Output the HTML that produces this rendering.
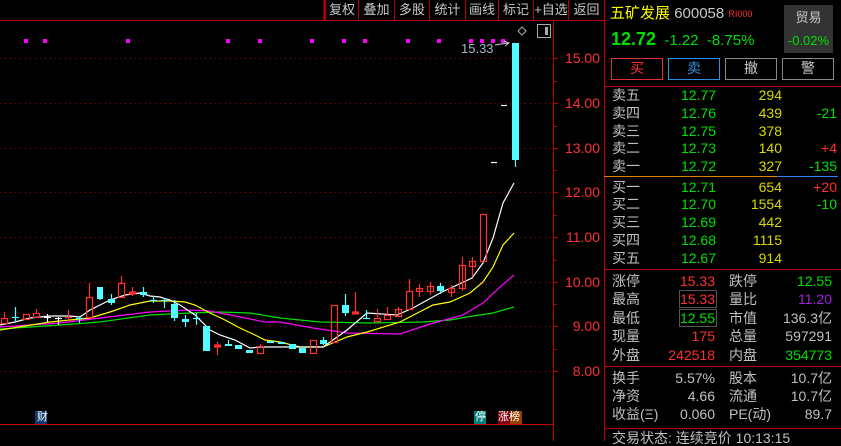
<!DOCTYPE html>
<html><head><meta charset="utf-8"><style>
*{margin:0;padding:0;box-sizing:border-box}
body{width:841px;height:441px;background:#000;overflow:hidden;position:relative;font-family:"Liberation Sans","Noto Sans CJK SC",sans-serif;font-size:13px;color:#c0c0c0}
.a{position:absolute;white-space:nowrap;line-height:16px}
.r{text-align:right}
.g{color:#00e000}.rd{color:#ff3030}.y{color:#d8d800}.w{color:#c0c0c0}
.tb{position:absolute;top:0;height:20px;line-height:20px;font-size:13px;color:#c8c8c8;text-align:center;border-left:1px solid #b00000}
.btn{position:absolute;top:58px;height:22px;width:52px;text-align:center;line-height:20px;font-size:14px}
.p .a{font-size:14px}
</style></head><body>
<svg width="841" height="441" style="position:absolute;left:0;top:0">
<g stroke="#a00000" stroke-width="1" stroke-dasharray="1,4">
<line x1="0" y1="58.5" x2="552" y2="58.5"/><line x1="0" y1="103.5" x2="552" y2="103.5"/>
<line x1="0" y1="148.5" x2="552" y2="148.5"/><line x1="0" y1="192.5" x2="552" y2="192.5"/>
<line x1="0" y1="237.5" x2="552" y2="237.5"/><line x1="0" y1="282.5" x2="552" y2="282.5"/>
<line x1="0" y1="326.5" x2="552" y2="326.5"/><line x1="0" y1="371.5" x2="552" y2="371.5"/>
</g>
<g stroke="#c00000" stroke-width="1">
<line x1="0" y1="20.5" x2="604" y2="20.5"/>
<line x1="553.5" y1="20" x2="553.5" y2="441"/>
<line x1="0" y1="424.5" x2="553" y2="424.5"/>
<line x1="604.5" y1="0" x2="604.5" y2="441"/>
<line x1="553" y1="58.5" x2="558" y2="58.5"/><line x1="553" y1="81.5" x2="557" y2="81.5"/>
<line x1="553" y1="103.5" x2="558" y2="103.5"/><line x1="553" y1="126.5" x2="557" y2="126.5"/>
<line x1="553" y1="148.5" x2="558" y2="148.5"/><line x1="553" y1="170.5" x2="557" y2="170.5"/>
<line x1="553" y1="192.5" x2="558" y2="192.5"/><line x1="553" y1="215.5" x2="557" y2="215.5"/>
<line x1="553" y1="237.5" x2="558" y2="237.5"/><line x1="553" y1="260.5" x2="557" y2="260.5"/>
<line x1="553" y1="282.5" x2="558" y2="282.5"/><line x1="553" y1="304.5" x2="557" y2="304.5"/>
<line x1="553" y1="326.5" x2="558" y2="326.5"/><line x1="553" y1="349.5" x2="557" y2="349.5"/>
<line x1="553" y1="371.5" x2="558" y2="371.5"/>
<line x1="604" y1="86.5" x2="841" y2="86.5"/>
<line x1="604" y1="269.5" x2="841" y2="269.5"/>
<line x1="604" y1="366.5" x2="841" y2="366.5"/>
<line x1="604" y1="428.5" x2="841" y2="428.5"/>
<line x1="324.5" y1="0" x2="324.5" y2="20" stroke-width="2"/>
</g>
<line x1="604" y1="176.5" x2="778" y2="176.5" stroke="#e08000"/>
<line x1="778" y1="176.5" x2="838" y2="176.5" stroke="#3080ff"/>
<g fill="#ff00ff">
<rect x="24" y="39" width="4" height="4"/><rect x="43" y="39" width="4" height="4"/><rect x="126" y="39" width="4" height="4"/><rect x="226" y="39" width="4" height="4"/><rect x="258" y="39" width="4" height="4"/><rect x="310" y="39" width="4" height="4"/><rect x="342" y="39" width="4" height="4"/><rect x="363" y="39" width="4" height="4"/><rect x="406" y="39" width="4" height="4"/><rect x="437" y="39" width="4" height="4"/><rect x="469" y="39" width="4" height="4"/><rect x="480" y="39" width="4" height="4"/><rect x="491" y="39" width="4" height="4"/><rect x="501" y="39" width="4" height="4"/>
</g>
<path d="M522 27 L526 31 L522 35 L518 31Z" fill="none" stroke="#aaa"/>
<rect x="537.5" y="24.5" width="13" height="13" fill="none" stroke="#aaa"/><rect x="545" y="27" width="3" height="8" fill="#aaa"/>
<path d="M495 45 L508 43 M504 41 L509 43 L505 46" stroke="#ccc" fill="none"/>
<g fill="none" stroke-width="1.2">
<polyline stroke="#00e000" points="0,329 30,327 60,325 100,322 150,315 190,313 220,312 250,313 280,318 320,322 370,323 423,322 450,320 467,317 493,313 514,307"/>
<polyline stroke="#ff00ff" points="0,327 30,325 60,323 100,318 150,312 190,310 210,311 225,314 245,318 265,322 280,322 313,328 347,333 400,334 430,324 463,315 483,303 500,287 514,275"/>
<polyline stroke="#ffff00" points="0,330 50,322 90,318 110,312 130,305 150,301 170,301 185,302 195,305 210,313 225,320 240,328 255,335 265,340 280,342 300,347 323,347 347,337 367,332 400,322 433,305 450,302 470,293 483,282 493,267 503,245 514,233"/>
<polyline stroke="#ffffff" points="0,325 15,322 30,318 50,316 70,316 80,317 90,310 100,305 110,300 125,295 140,293 150,296 160,297 170,300 180,305 195,315 210,330 220,335 235,340 250,348 260,347 300,347 323,347 347,330 367,313 397,315 413,308 440,293 472,278 483,263 493,238 503,203 514,183"/>
</g>
<g stroke="#ff3030" fill="none" stroke-width="1.2">
<line x1="4.5" y1="312" x2="4.5" y2="318"/><rect x="1.5" y="318.5" width="6" height="5"/>
<rect x="23.5" y="314.5" width="6" height="5"/>
<line x1="36.5" y1="309" x2="36.5" y2="313"/><rect x="33.5" y="313.5" width="6" height="4"/>
<line x1="68.5" y1="310" x2="68.5" y2="321"/><line x1="65" y1="317.5" x2="72" y2="317.5"/>
<line x1="89.5" y1="283" x2="89.5" y2="297"/><rect x="86.5" y="297.5" width="6" height="20"/>
<line x1="121.5" y1="276" x2="121.5" y2="283"/><rect x="118.5" y="283.5" width="6" height="14"/>
<line x1="132.5" y1="287" x2="132.5" y2="296"/><rect x="129.5" y="292" width="6" height="2" fill="#ff3030"/>
<line x1="217.5" y1="342" x2="217.5" y2="355"/><rect x="214.5" y="345" width="6" height="2" fill="#ff3030"/>
<line x1="260.5" y1="344" x2="260.5" y2="346"/><rect x="257.5" y="346.5" width="6" height="7"/>
<rect x="310.5" y="340.5" width="6" height="13"/>
<rect x="331.5" y="305.5" width="6" height="37"/>
<line x1="355.5" y1="292" x2="355.5" y2="313"/><rect x="352.5" y="312" width="6" height="2" fill="#ff3030"/>
<line x1="377.5" y1="309" x2="377.5" y2="318"/><rect x="374.5" y="318.5" width="6" height="3"/>
<line x1="387.5" y1="307" x2="387.5" y2="315"/><rect x="384.5" y="315.5" width="6" height="4"/>
<line x1="398.5" y1="307" x2="398.5" y2="316"/><rect x="395.5" y="309.5" width="6" height="7"/>
<line x1="409.5" y1="279" x2="409.5" y2="291"/><rect x="406.5" y="291.5" width="6" height="18"/>
<line x1="419.5" y1="284" x2="419.5" y2="297"/><rect x="416.5" y="288.5" width="6" height="3"/>
<line x1="430.5" y1="282" x2="430.5" y2="295"/><rect x="427.5" y="286.5" width="6" height="5"/>
<line x1="451.5" y1="285" x2="451.5" y2="297"/><rect x="448.5" y="288.5" width="6" height="4"/>
<line x1="462.5" y1="257" x2="462.5" y2="291"/><rect x="459.5" y="265.5" width="6" height="23"/>
<line x1="472.5" y1="257" x2="472.5" y2="277"/><rect x="469.5" y="261.5" width="6" height="5"/>
<rect x="480.5" y="214.5" width="6" height="47"/>
</g>
<g stroke="#ffffff" stroke-width="1.2">
<line x1="47.5" y1="314" x2="47.5" y2="322"/><line x1="44" y1="317.5" x2="51" y2="317.5"/>
<line x1="58.5" y1="317" x2="58.5" y2="325"/><line x1="55" y1="318.5" x2="62" y2="318.5"/>
<line x1="491" y1="162.5" x2="497" y2="162.5"/><line x1="501" y1="105.5" x2="507" y2="105.5"/>
</g>
<g stroke="#50ffff" fill="#50ffff" stroke-width="1.2">
<line x1="15.5" y1="307" x2="15.5" y2="322"/><line x1="12" y1="317.5" x2="19" y2="317.5"/>
<line x1="79.5" y1="316" x2="79.5" y2="323"/><line x1="76" y1="318.5" x2="83" y2="318.5"/>
<rect x="97" y="287" width="6" height="12" stroke="none"/><line x1="100" y1="299" x2="100" y2="300"/>
<line x1="111.5" y1="294" x2="111.5" y2="305"/><rect x="108" y="299" width="7" height="4" stroke="none"/>
<line x1="143.5" y1="287" x2="143.5" y2="297"/><rect x="140" y="292" width="7" height="3" stroke="none"/>
<line x1="153.5" y1="296" x2="153.5" y2="303"/><line x1="150" y1="300.5" x2="157" y2="300.5"/>
<line x1="164.5" y1="298" x2="164.5" y2="308"/><line x1="161" y1="300.5" x2="168" y2="300.5"/>
<line x1="174.5" y1="300" x2="174.5" y2="321"/><rect x="171" y="304" width="7" height="14" stroke="none"/>
<line x1="185.5" y1="315" x2="185.5" y2="327"/><rect x="182" y="319" width="7" height="3" stroke="none"/>
<line x1="196.5" y1="313" x2="196.5" y2="325"/><line x1="193" y1="318.5" x2="200" y2="318.5"/>
<rect x="203" y="326" width="7" height="25" stroke="none"/>
<line x1="228.5" y1="340" x2="228.5" y2="345"/><rect x="225" y="344" width="7" height="2" stroke="none"/>
<rect x="235" y="345" width="7" height="4" stroke="none"/>
<rect x="246" y="350" width="7" height="3" stroke="none"/>
<rect x="267" y="341" width="7" height="2" stroke="none"/>
<rect x="278" y="342" width="7" height="2" stroke="none"/>
<rect x="289" y="344" width="7" height="5" stroke="none"/>
<rect x="299" y="348" width="7" height="5" stroke="none"/>
<line x1="323.5" y1="337" x2="323.5" y2="345"/><rect x="320" y="340" width="7" height="4" stroke="none"/>
<line x1="345.5" y1="294" x2="345.5" y2="316"/><rect x="342" y="305" width="7" height="8" stroke="none"/>
<line x1="366.5" y1="310" x2="366.5" y2="319"/><line x1="363" y1="318.5" x2="370" y2="318.5"/>
<line x1="440.5" y1="283" x2="440.5" y2="294"/><rect x="437" y="286" width="7" height="5" stroke="none"/>
<rect x="512" y="43" width="7" height="117" stroke="none"/><line x1="515.5" y1="160" x2="515.5" y2="167"/>
</g>
<rect x="35" y="411" width="12" height="13" fill="#103a70"/>
<rect x="474" y="411" width="12" height="13" fill="#00807a"/>
<rect x="498" y="411" width="12" height="13" fill="#800010"/>
<rect x="510" y="411" width="12" height="13" fill="#904000"/>
<rect x="784" y="5" width="49" height="48" fill="#333"/>
<rect x="611.5" y="58.5" width="51" height="21" fill="none" stroke="#e03030"/>
<rect x="668.5" y="58.5" width="51" height="21" fill="none" stroke="#3090e0"/>
<rect x="725.5" y="58.5" width="51" height="21" fill="none" stroke="#888"/>
<rect x="782.5" y="58.5" width="51" height="21" fill="none" stroke="#888"/>
<rect x="679.5" y="290.5" width="37" height="17" fill="none" stroke="#555"/>
<rect x="679.5" y="309.5" width="37" height="17" fill="none" stroke="#555"/>
</svg>
<div class="tb" style="left:325px;width:33px">复权</div>
<div class="tb" style="left:358px;width:36px">叠加</div>
<div class="tb" style="left:394px;width:35px">多股</div>
<div class="tb" style="left:429px;width:36px">统计</div>
<div class="tb" style="left:465px;width:33px">画线</div>
<div class="tb" style="left:498px;width:35px">标记</div>
<div class="tb" style="left:533px;width:35px">+自选</div>
<div class="tb" style="left:568px;width:36px">返回</div>
<div class="a" style="left:461px;top:41px;color:#a0b4c8;font-size:13px">15.33</div>
<div class="a" style="left:37px;top:409px;color:#fff;font-size:11px">财</div>
<div class="a" style="left:475px;top:409px;color:#fff;font-size:11px">停</div>
<div class="a" style="left:498px;top:409px;color:#fff;font-size:11px">涨榜</div>
<div style="position:absolute;left:556px;top:0;width:44px;color:#ff3030;font-size:14px;text-align:right">
<div class="a r" style="top:50px;width:44px">15.00</div><div class="a r" style="top:95px;width:44px">14.00</div>
<div class="a r" style="top:140px;width:44px">13.00</div><div class="a r" style="top:184px;width:44px">12.00</div>
<div class="a r" style="top:229px;width:44px">11.00</div><div class="a r" style="top:274px;width:44px">10.00</div>
<div class="a r" style="top:318px;width:44px">9.00</div><div class="a r" style="top:363px;width:44px">8.00</div>
</div>
<div class="a" style="left:610px;top:6px;font-size:15px"><span style="color:#ffff00">五矿发展</span> <span style="color:#c8c8c8">600058</span> <span style="color:#ff3030;font-size:9px;vertical-align:top">RI000</span></div>
<div class="a" style="left:611px;top:31px;font-size:15px" ><b class="g" style="font-size:18px">12.72</b> <span class="g">&nbsp;-1.22&nbsp;&nbsp;-8.75%</span></div>
<div class="a" style="left:784px;top:10px;width:49px;text-align:center;color:#c8c8c8">贸易</div>
<div class="a g" style="left:784px;top:33px;width:49px;text-align:center">-0.02%</div>
<div class="btn rd" style="left:611px">买</div>
<div class="btn" style="left:668px;color:#3090e0">卖</div>
<div class="btn" style="left:725px;color:#ccc">撤</div>
<div class="btn" style="left:782px;color:#ccc">警</div>
<div class="p" style="position:absolute;left:0;top:0">
<div class="a" style="left:612px;top:87px">卖五</div><div class="a r g" style="left:660px;top:87px;width:56px">12.77</div><div class="a r y" style="left:740px;top:87px;width:42px">294</div>
<div class="a" style="left:612px;top:105px">卖四</div><div class="a r g" style="left:660px;top:105px;width:56px">12.76</div><div class="a r y" style="left:740px;top:105px;width:42px">439</div><div class="a r g" style="left:790px;top:105px;width:47px">-21</div>
<div class="a" style="left:612px;top:123px">卖三</div><div class="a r g" style="left:660px;top:123px;width:56px">12.75</div><div class="a r y" style="left:740px;top:123px;width:42px">378</div>
<div class="a" style="left:612px;top:140px">卖二</div><div class="a r g" style="left:660px;top:140px;width:56px">12.73</div><div class="a r y" style="left:740px;top:140px;width:42px">140</div><div class="a r rd" style="left:790px;top:140px;width:47px">+4</div>
<div class="a" style="left:612px;top:158px">卖一</div><div class="a r g" style="left:660px;top:158px;width:56px">12.72</div><div class="a r y" style="left:740px;top:158px;width:42px">327</div><div class="a r g" style="left:790px;top:158px;width:47px">-135</div>
<div class="a" style="left:612px;top:179px">买一</div><div class="a r g" style="left:660px;top:179px;width:56px">12.71</div><div class="a r y" style="left:740px;top:179px;width:42px">654</div><div class="a r rd" style="left:790px;top:179px;width:47px">+20</div>
<div class="a" style="left:612px;top:196px">买二</div><div class="a r g" style="left:660px;top:196px;width:56px">12.70</div><div class="a r y" style="left:740px;top:196px;width:42px">1554</div><div class="a r g" style="left:790px;top:196px;width:47px">-10</div>
<div class="a" style="left:612px;top:214px">买三</div><div class="a r g" style="left:660px;top:214px;width:56px">12.69</div><div class="a r y" style="left:740px;top:214px;width:42px">442</div>
<div class="a" style="left:612px;top:232px">买四</div><div class="a r g" style="left:660px;top:232px;width:56px">12.68</div><div class="a r y" style="left:740px;top:232px;width:42px">1115</div>
<div class="a" style="left:612px;top:250px">买五</div><div class="a r g" style="left:660px;top:250px;width:56px">12.67</div><div class="a r y" style="left:740px;top:250px;width:42px">914</div>

<div class="a" style="left:612px;top:273px">涨停</div><div class="a r rd" style="left:660px;top:273px;width:55px">15.33</div><div class="a" style="left:729px;top:273px">跌停</div><div class="a r g" style="left:780px;top:273px;width:52px">12.55</div>
<div class="a" style="left:612px;top:291px">最高</div><div class="a r rd" style="left:660px;top:291px;width:55px">15.33</div><div class="a" style="left:729px;top:291px">量比</div><div class="a r" style="left:780px;top:291px;width:52px;color:#a020e0">11.20</div>
<div class="a" style="left:612px;top:310px">最低</div><div class="a r g" style="left:660px;top:310px;width:55px">12.55</div><div class="a" style="left:729px;top:310px">市值</div><div class="a r" style="left:770px;top:310px;width:62px">136.3亿</div>
<div class="a" style="left:612px;top:328px">现量</div><div class="a r rd" style="left:660px;top:328px;width:55px">175</div><div class="a" style="left:729px;top:328px">总量</div><div class="a r" style="left:770px;top:328px;width:62px">597291</div>
<div class="a" style="left:612px;top:347px">外盘</div><div class="a r rd" style="left:650px;top:347px;width:65px">242518</div><div class="a" style="left:729px;top:347px">内盘</div><div class="a r g" style="left:770px;top:347px;width:62px">354773</div>

<div class="a" style="left:612px;top:370px">换手</div><div class="a r" style="left:650px;top:370px;width:65px">5.57%</div><div class="a" style="left:729px;top:370px">股本</div><div class="a r" style="left:770px;top:370px;width:62px">10.7亿</div>
<div class="a" style="left:612px;top:388px">净资</div><div class="a r" style="left:650px;top:388px;width:65px">4.66</div><div class="a" style="left:729px;top:388px">流通</div><div class="a r" style="left:770px;top:388px;width:62px">10.7亿</div>
<div class="a" style="left:612px;top:406px">收益(Ξ)</div><div class="a r" style="left:650px;top:406px;width:65px">0.060</div><div class="a" style="left:729px;top:406px">PE(动)</div><div class="a r" style="left:770px;top:406px;width:62px">89.7</div>
<div class="a" style="left:612px;top:430px">交易状态: 连续竞价 10:13:15</div>
</div>
</body></html>
